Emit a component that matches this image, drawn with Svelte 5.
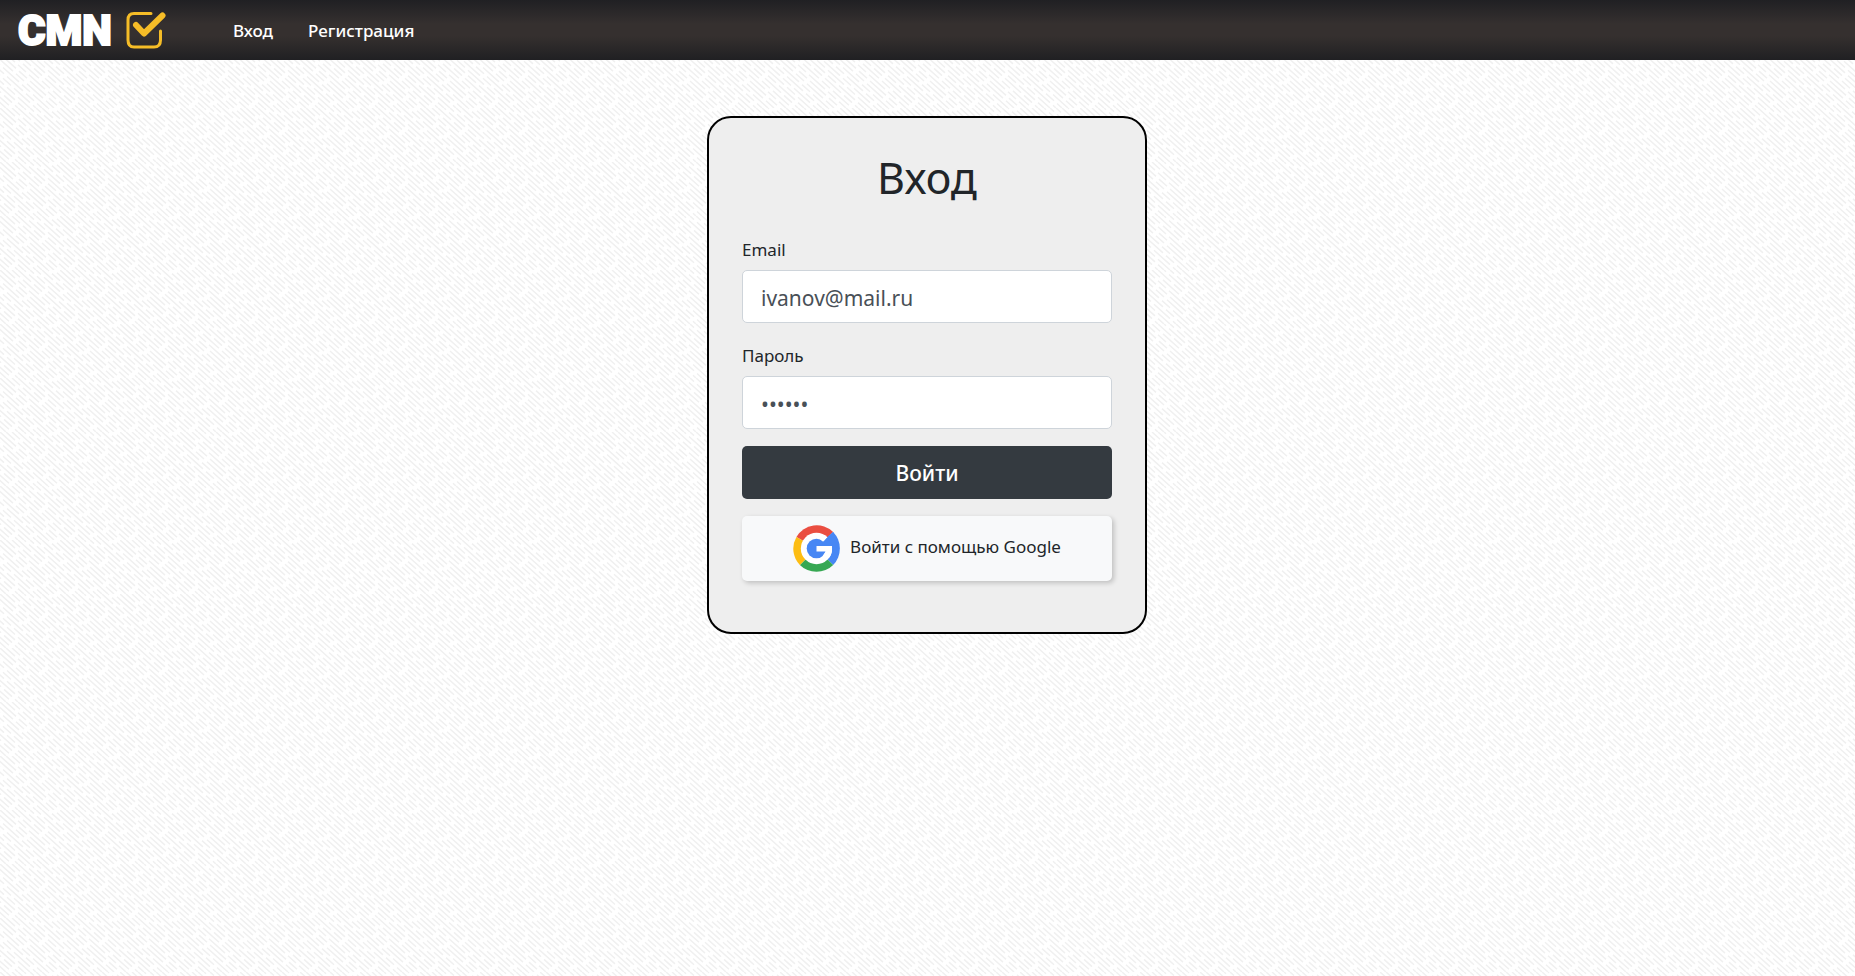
<script>
  let email = $state('ivanov@mail.ru');
  let password = $state('secret');
</script>

<header>
  <a class="brand" href="#home">
    <span>CMN</span>
    <svg viewBox="0 0 40 38" width="40" height="38" fill="none" stroke="#f6bd27" aria-hidden="true">
      <path d="M25 2.5H8Q2 2.5 2 9V29Q2 36 8 36H28Q34.5 36 34.5 29V20" stroke-width="3" stroke-linecap="round" />
      <path d="M10 14 18 22.5 36.5 4.5" stroke-width="6" stroke-linecap="round" stroke-linejoin="round" />
    </svg>
  </a>
  <nav>
    <a href="#login">Вход</a>
    <a href="#register">Регистрация</a>
  </nav>
</header>

<main>
  <form onsubmit={(event) => event.preventDefault()}>
    <h1>Вход</h1>
    <div class="field">
      <label for="email">Email</label>
      <input id="email" type="email" bind:value={email} />
    </div>
    <div class="field">
      <label for="password">Пароль</label>
      <input id="password" type="password" bind:value={password} />
    </div>
    <button class="submit" type="submit">Войти</button>
    <button class="google" type="button">
      <svg viewBox="0 0 48 48" width="47" height="47" aria-hidden="true">
        <path d="M24 24 3.5 12.2A24 24 0 0 1 41 7.2Z" fill="#ea4e41" />
        <path d="M24 24 41 7.2A24 24 0 0 1 41 40.8Z" fill="#4787f4" />
        <path d="M24 24 41 40.8A24 24 0 0 1 7 40.8Z" fill="#37a853" />
        <path d="M24 24 7 40.8A24 24 0 0 1 3.5 12.2Z" fill="#fdbd12" />
        <circle cx="24" cy="24" r="16" fill="#fff" />
        <path d="M34 13 41 7.2 46 17 44 28H40V21.5H30Z" fill="#4787f4" />
        <circle cx="24" cy="24" r="10" fill="#4787f4" />
        <path d="M30.8 17 35.4 12.5 30 10 27 14Z" fill="#fff" />
        <path d="M30.5 17.3 35.4 12.5 40 21.5H30Z" fill="#4787f4" />
        <path d="M24 21.5H39.7Q40.5 29 36.5 34L30 32 33.3 27H24Z" fill="#fff" />
      </svg>
      <span>Войти с помощью Google</span>
    </button>
  </form>
</main>

<style>
  :global(body) {
    min-height: 100vh;
    background: #fff url("data:image/svg+xml,%3Csvg xmlns='http://www.w3.org/2000/svg' width='60' height='54'%3E%3Cg fill='none' stroke='%23f0f0f0' stroke-width='1.5' stroke-dasharray='16 3 8 3'%3E%3Cpath pathLength='120' d='M0 0l60 54M-60 0l60 54'/%3E%3Cpath pathLength='120' stroke-dashoffset='7' d='M6 0l60 54M-54 0l60 54'/%3E%3Cpath pathLength='120' stroke-dashoffset='19' d='M12 0l60 54M-48 0l60 54'/%3E%3Cpath pathLength='120' stroke-dashoffset='3' d='M18 0l60 54M-42 0l60 54'/%3E%3Cpath pathLength='120' stroke-dashoffset='25' d='M24 0l60 54M-36 0l60 54'/%3E%3Cpath pathLength='120' stroke-dashoffset='12' d='M30 0l60 54M-30 0l60 54'/%3E%3Cpath pathLength='120' stroke-dashoffset='22' d='M36 0l60 54M-24 0l60 54'/%3E%3Cpath pathLength='120' stroke-dashoffset='5' d='M42 0l60 54M-18 0l60 54'/%3E%3Cpath pathLength='120' stroke-dashoffset='15' d='M48 0l60 54M-12 0l60 54'/%3E%3Cpath pathLength='120' stroke-dashoffset='27' d='M54 0l60 54M-6 0l60 54'/%3E%3C/g%3E%3C/svg%3E");
    color: #212529;
    font-family: "Noto Sans", sans-serif;
    font-size: 17px;
    line-height: 24px;
  }
  * {
    box-sizing: border-box;
  }
  header {
    display: flex;
    align-items: center;
    min-height: 60px;
    padding: 0 18px;
    background: linear-gradient(#202023, #35302f 40%, #35302f 60%, #202023);
  }
  a {
    color: #fff;
    text-decoration: none;
  }
  .brand {
    display: flex;
    align-items: center;
    gap: 14px;
    margin-right: 67px;
    font-family: Roboto, sans-serif;
    font-size: 42px;
    line-height: 48px;
    font-weight: 900;
    -webkit-text-stroke: 2px #fff;
  }
  .brand span {
    padding-top: 2px;
  }
  nav {
    display: flex;
    gap: 35px;
    padding-top: 2px;
    font-weight: 500;
  }
  main {
    display: flex;
    justify-content: center;
    padding: 56px 17px 56px 16px;
  }
  form {
    display: flex;
    flex-direction: column;
    gap: 17px;
    width: 100%;
    max-width: 440px;
    padding: 32px 33px 51px;
    border: 2px solid #000;
    border-radius: 24px;
    background: #eee;
  }
  h1 {
    margin: 0 0 15px;
    font-size: 43px;
    line-height: 56px;
    font-weight: 400;
    text-align: center;
  }
  .field {
    display: flex;
    flex-direction: column;
    gap: 8px;
  }
  .field + .field {
    margin-top: 4px;
  }
  input {
    width: 100%;
    height: 53px;
    padding: 3px 18px 0;
    border: 1px solid #ced4da;
    border-radius: 5px;
    background: #fff;
    color: #495057;
    font: inherit;
    font-size: 21px;
  }
  button {
    border: 0;
    border-radius: 5px;
    font: inherit;
  }
  .submit {
    height: 53px;
    background: #343a40;
    color: #fff;
    font-size: 21px;
    font-weight: 500;
  }
  .google {
    display: flex;
    align-items: center;
    justify-content: center;
    gap: 10px;
    height: 65px;
    background: #f8f9fa;
    color: #212529;
    box-shadow: 2px 2px 5px rgba(0, 0, 0, 0.2);
  }
  .google span {
    padding-bottom: 4px;
  }
</style>
